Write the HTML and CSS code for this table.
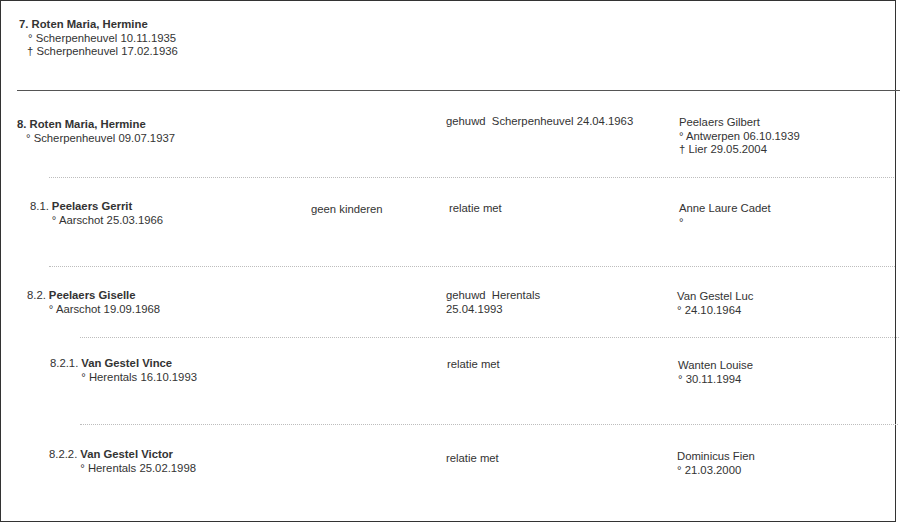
FILE: index.html
```html
<!DOCTYPE html>
<html lang="nl">
<head>
<meta charset="utf-8">
<title>Stamboom</title>
<link rel="stylesheet" href="styles.css">
</head>
<body>
<div class="page">

  <section class="sec sec-7">
    <div class="cell person-main pm-7">
      <div class="b">7. Roten Maria, Hermine</div>
      <div class="ind">° Scherpenheuvel 10.11.1935</div>
      <div class="ind ind-d">† Scherpenheuvel 17.02.1936</div>
    </div>
  </section>
  <div class="rule solid"></div>

  <section class="sec sec-8">
    <div class="cell person-main pm-8">
      <div class="b">8. Roten Maria, Hermine</div>
      <div class="ind">° Scherpenheuvel 09.07.1937</div>
    </div>
    <div class="cell rel rel-8">gehuwd&nbsp; Scherpenheuvel 24.04.1963</div>
    <div class="cell partner pt-8">
      <div>Peelaers Gilbert</div>
      <div>° Antwerpen 06.10.1939</div>
      <div>† Lier 29.05.2004</div>
    </div>
  </section>
  <div class="rule dotted r-1"></div>

  <section class="sec sec-81">
    <div class="cell child c-81">
      <span class="num">8.1.</span>
      <div class="info">
        <div class="b">Peelaers Gerrit</div>
        <div>° Aarschot 25.03.1966</div>
      </div>
    </div>
    <div class="cell mid mid-81">geen kinderen</div>
    <div class="cell rel rel-81">relatie met</div>
    <div class="cell partner pt-81">
      <div>Anne Laure Cadet</div>
      <div>°</div>
    </div>
  </section>
  <div class="rule dotted r-2"></div>

  <section class="sec sec-82">
    <div class="cell child c-82">
      <span class="num">8.2.</span>
      <div class="info">
        <div class="b">Peelaers Giselle</div>
        <div>° Aarschot 19.09.1968</div>
      </div>
    </div>
    <div class="cell rel rel-82">
      <div>gehuwd&nbsp; Herentals</div>
      <div>25.04.1993</div>
    </div>
    <div class="cell partner pt-82">
      <div>Van Gestel Luc</div>
      <div>° 24.10.1964</div>
    </div>
  </section>
  <div class="rule dotted r-3"></div>

  <section class="sec sec-821">
    <div class="cell child c-821">
      <span class="num">8.2.1.</span>
      <div class="info">
        <div class="b">Van Gestel Vince</div>
        <div>° Herentals 16.10.1993</div>
      </div>
    </div>
    <div class="cell rel rel-821">relatie met</div>
    <div class="cell partner pt-821">
      <div>Wanten Louise</div>
      <div>° 30.11.1994</div>
    </div>
  </section>
  <div class="rule dotted r-4"></div>

  <section class="sec sec-822">
    <div class="cell child c-822">
      <span class="num">8.2.2.</span>
      <div class="info">
        <div class="b">Van Gestel Victor</div>
        <div>° Herentals 25.02.1998</div>
      </div>
    </div>
    <div class="cell rel rel-822">relatie met</div>
    <div class="cell partner pt-822">
      <div>Dominicus Fien</div>
      <div>° 21.03.2000</div>
    </div>
  </section>

</div>
</body>
</html>
```

FILE: styles.css
```css
html, body {
  margin: 0;
  padding: 0;
  background: #ffffff;
}

body {
  font-family: "Liberation Sans", Arial, Helvetica, sans-serif;
  font-size: 11.3px;
  line-height: 13.5px;
  color: #333333;
}

.page {
  box-sizing: border-box;
  width: 896px;
  height: 522px;
  border: 1px solid #333333;
  display: flex;
  flex-direction: column;
}

.sec {
  box-sizing: border-box;
  display: grid;
  grid-template-columns: 310px 135px 231px 1fr;
  align-items: start;
  flex: none;
}

.cell { white-space: nowrap; }
.person-main { grid-column: 1; }
.child { grid-column: 1; display: flex; gap: 3px; }
.mid { grid-column: 2; }
.rel { grid-column: 3; }
.partner { grid-column: 4; }

.b { font-weight: bold; }
.ind { padding-left: 9px; }
.ind-d { padding-left: 8px; }

/* separators */
.rule { flex: none; height: 0; }
.solid {
  border-top: 1px solid #555555;
  margin-left: 16px;
  margin-right: -6px;
}
.dotted { border-top: 1px dotted #bdbdbd; }
.r-1 { margin-left: 48px; margin-right: 1px; }
.r-2 { margin-left: 48px; margin-right: 0; }
.r-3 { margin-left: 79px; margin-right: -6px; }
.r-4 { margin-left: 79px; margin-right: -3px; }

/* section 7 */
.sec-7 { height: 89px; padding-top: 17px; }
.pm-7 { padding-left: 18px; }

/* section 8 */
.sec-8 { height: 86px; padding-top: 25px; }
.pm-8 { padding-left: 16px; margin-top: 2px; }
.rel-8 { padding-left: 0; margin-top: -1px; }
.pt-8 { padding-left: 2px; }

/* section 8.1 */
.sec-81 { height: 88px; padding-top: 24px; }
.c-81 { padding-left: 29px; margin-top: -2px; }
.mid-81 { margin-top: 1px; }
.rel-81 { padding-left: 3px; }
.pt-81 { padding-left: 2px; }

/* section 8.2 */
.sec-82 { height: 70px; padding-top: 22px; }
.c-82 { padding-left: 26px; }
.rel-82 { padding-left: 0; }
.pt-82 { margin-top: 1px; }

/* section 8.2.1 */
.sec-821 { height: 86px; padding-top: 19px; }
.c-821 { padding-left: 49px; }
.rel-821 { padding-left: 1px; margin-top: 1px; }
.pt-821 { padding-left: 1px; margin-top: 2px; }

/* section 8.2.2 */
.sec-822 { flex: 1; padding-top: 23px; }
.c-822 { padding-left: 48px; }
.rel-822 { margin-top: 4px; }
.pt-822 { margin-top: 2px; }
```
